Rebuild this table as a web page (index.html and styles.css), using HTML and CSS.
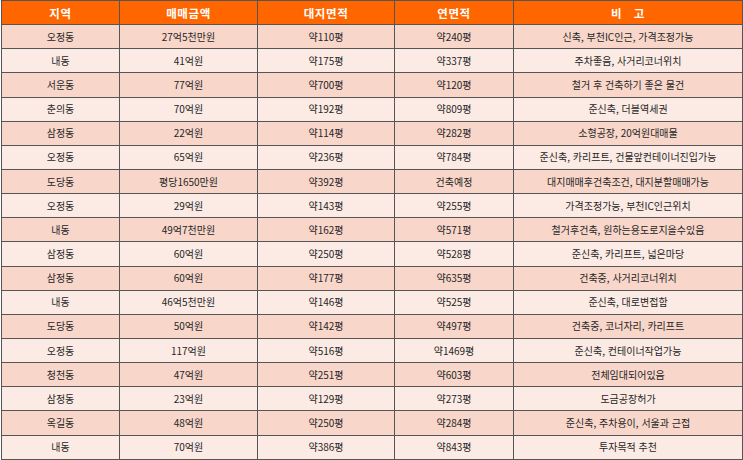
FILE: index.html
```html
<!DOCTYPE html>
<html lang="ko">
<head>
<meta charset="utf-8">
<link rel="stylesheet" href="styles.css">
</head>
<body>
<table class="list">
  <colgroup>
    <col class="c1"><col class="c2"><col class="c3"><col class="c4"><col class="c5">
  </colgroup>
  <thead>
    <tr><th>지역</th><th>매매금액</th><th>대지면적</th><th>연면적</th><th>비&nbsp;&nbsp;&nbsp;고</th></tr>
  </thead>
  <tbody>
    <tr><td>오정동</td><td>27억5천만원</td><td>약110평</td><td>약240평</td><td>신축, 부천IC인근, 가격조정가능</td></tr>
    <tr><td>내동</td><td>41억원</td><td>약175평</td><td>약337평</td><td>주차좋음, 사거리코너위치</td></tr>
    <tr><td>서운동</td><td>77억원</td><td>약700평</td><td>약120평</td><td>철거 후 건축하기 좋은 물건</td></tr>
    <tr><td>춘의동</td><td>70억원</td><td>약192평</td><td>약809평</td><td>준신축, 더블역세권</td></tr>
    <tr><td>삼정동</td><td>22억원</td><td>약114평</td><td>약282평</td><td>소형공장, 20억원대매물</td></tr>
    <tr><td>오정동</td><td>65억원</td><td>약236평</td><td>약784평</td><td>준신축, 카리프트, 건물앞컨테이너진입가능</td></tr>
    <tr><td>도당동</td><td>평당1650만원</td><td>약392평</td><td>건축예정</td><td>대지매매후건축조건, 대지분할매매가능</td></tr>
    <tr><td>오정동</td><td>29억원</td><td>약143평</td><td>약255평</td><td>가격조정가능, 부천IC인근위치</td></tr>
    <tr><td>내동</td><td>49억7천만원</td><td>약162평</td><td>약571평</td><td>철거후건축, 원하는용도로지을수있음</td></tr>
    <tr><td>삼정동</td><td>60억원</td><td>약250평</td><td>약528평</td><td>준신축, 카리프트, 넓은마당</td></tr>
    <tr><td>삼정동</td><td>60억원</td><td>약177평</td><td>약635평</td><td>건축중, 사거리코너위치</td></tr>
    <tr><td>내동</td><td>46억5천만원</td><td>약146평</td><td>약525평</td><td>준신축, 대로변접함</td></tr>
    <tr><td>도당동</td><td>50억원</td><td>약142평</td><td>약497평</td><td>건축중, 코너자리, 카리프트</td></tr>
    <tr><td>오정동</td><td>117억원</td><td>약516평</td><td>약1469평</td><td>준신축, 컨테이너작업가능</td></tr>
    <tr><td>청천동</td><td>47억원</td><td>약251평</td><td>약603평</td><td>전체임대되어있음</td></tr>
    <tr><td>삼정동</td><td>23억원</td><td>약129평</td><td>약273평</td><td>도금공장허가</td></tr>
    <tr><td>옥길동</td><td>48억원</td><td>약250평</td><td>약284평</td><td>준신축, 주차용이, 서울과 근접</td></tr>
    <tr><td>내동</td><td>70억원</td><td>약386평</td><td>약843평</td><td>투자목적 추천</td></tr>
  </tbody>
</table>
</body>
</html>
```

FILE: styles.css
```css
html, body {
  margin: 0;
  padding: 0;
  background: #ffffff;
}
body {
  padding: 0 0 0 1px;
}
.list {
  border-collapse: collapse;
  table-layout: fixed;
  width: 742px;
  font-family: "Noto Sans CJK KR", "Noto Sans", sans-serif;
  font-size: 10px;
  color: #262626;
}
.c1 { width: 118px; }
.c2 { width: 138px; }
.c3 { width: 137px; }
.c4 { width: 119px; }
.c5 { width: 229px; }
.list tr {
  height: 24.15px;
}
.list th,
.list td {
  border: 1px solid #555555;
  padding: 0;
  text-align: center;
  vertical-align: middle;
  white-space: nowrap;
  overflow: hidden;
  line-height: 14px;
}
.list th {
  background: #ff6600;
  color: #ffffff;
  font-weight: bold;
  font-size: 11.5px;
  letter-spacing: 0.6px;
}
.list tbody tr:nth-child(odd) td {
  background: #f8d6ca;
}
.list tbody tr:nth-child(even) td {
  background: #fcebe5;
}
```
